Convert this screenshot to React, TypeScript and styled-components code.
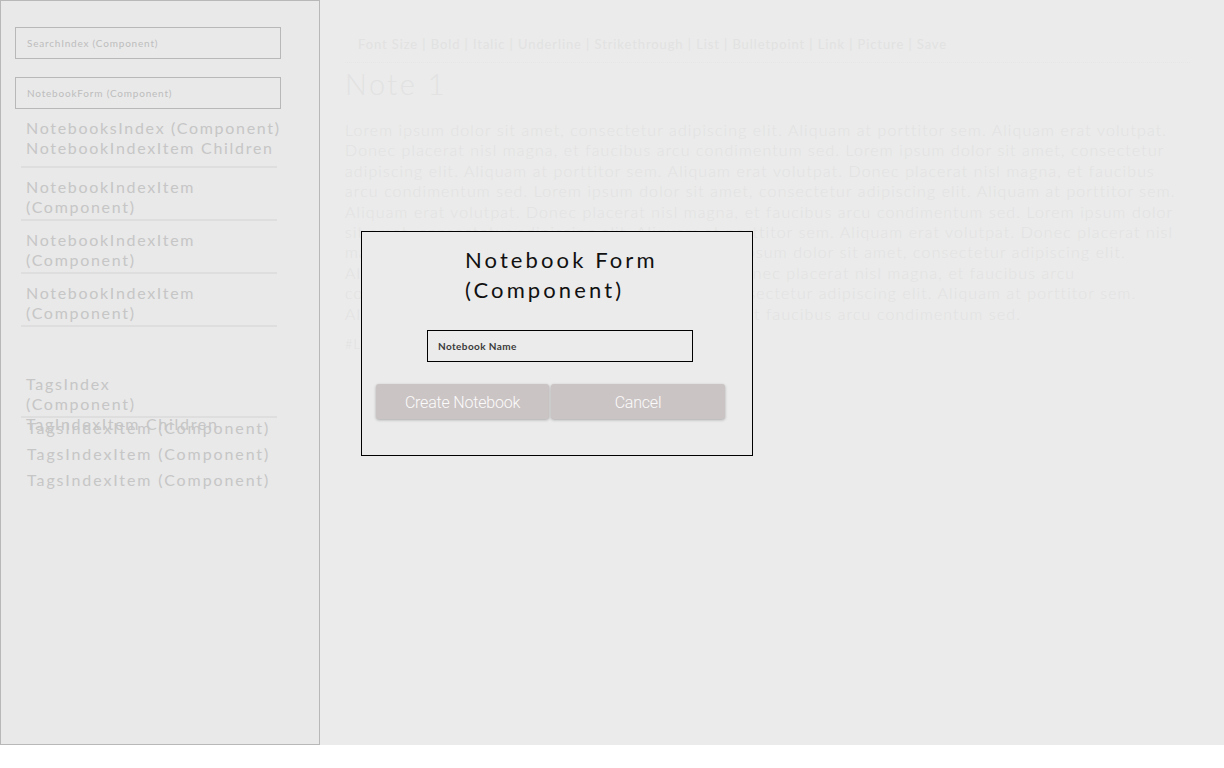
import * as React from 'react';
import styled, { createGlobalStyle } from 'styled-components';

const GlobalStyle = createGlobalStyle`
  html, body {
    margin: 0;
    padding: 0;
    background: #ffffff;
  }
  * {
    box-sizing: border-box;
  }
`

const Page = styled.div`
  display: flex;
  height: 745px;
  font-family: Lato, "Open Sans", sans-serif;
`

const Sidebar = styled.aside`
  width: 320px;
  flex: none;
  height: 100%;
  background: #e9e9e9;
  border: 1px solid #b8b8b8;
  padding: 26px 0 0 14px;
  display: flex;
  flex-direction: column;
`

const SideBox = styled.div`
  width: 266px;
  height: 32px;
  border: 1px solid #b8b8b8;
  display: flex;
  align-items: center;
  padding-left: 11px;
  font-size: 10px;
  letter-spacing: 0.8px;
  color: #bdbdbd;
  margin-bottom: 18px;
`

const SideText = styled.div`
  padding-left: 11px;
  font-size: 16px;
  line-height: 20px;
  letter-spacing: 1.7px;
  color: #c6c6c6;
  white-space: nowrap;
`

const IndexHead = styled.div`
  margin-top: -9px;
  margin-left: 6px;
  width: 256px;
  padding: 0 0 8px 5px;
  border-bottom: 2px solid #dedede;
`

const IndexItem = styled.div<{ narrow?: boolean }>`
  margin-left: 6px;
  width: 256px;
  padding: 9px 0 2px 5px;
  border-bottom: 2px solid #dedede;
  ${(p) => (p.narrow ? 'margin-top: 38px;' : '')}
`

const ItemText = styled.div`
  font-size: 16px;
  line-height: 20px;
  letter-spacing: 1.7px;
  color: #c6c6c6;
  white-space: nowrap;
`

const TagChildren = styled(SideText)`
  line-height: 16px;
  margin-top: -2px;
  margin-bottom: -12px;
`

const TagItem = styled(SideText)`
  padding-left: 12px;
  line-height: 16px;
  margin-bottom: 10px;
  letter-spacing: 1.9px;
`

const Main = styled.main`
  flex: 1;
  position: relative;
  background: #ebebeb;
  padding: 35px 34px 0 25px;
  color: #e2e2e2;
  overflow: hidden;
`

const Toolbar = styled.div`
  padding: 0 0 9px 13px;
  font-size: 13px;
  letter-spacing: 0.9px;
  line-height: 18px;
  border-bottom: 1px dotted #e6e6e6;
  white-space: nowrap;
`

const NoteTitle = styled.h1`
  margin: 1px 0 0;
  font-size: 29px;
  font-weight: 300;
  letter-spacing: 2.5px;
  line-height: 40px;
`

const Body = styled.div`
  margin-top: 16px;
  font-size: 16px;
  font-weight: 300;
  line-height: 20.4px;
  letter-spacing: 1.1px;
`

const BodyLine = styled.div`
  white-space: nowrap;
`

const Hashtag = styled.div`
  margin-top: 12px;
  font-size: 13px;
  font-weight: 300;
  letter-spacing: 1px;
`

const Modal = styled.div`
  position: absolute;
  left: 41px;
  top: 231px;
  width: 392px;
  height: 225px;
  background: #ebebeb;
  border: 1px solid #000000;
  padding: 13px 0 0 14px;
  display: flex;
  flex-direction: column;
`

const ModalTitle = styled.h2`
  margin: 0 0 0 89px;
  width: 215px;
  font-size: 22px;
  font-weight: 400;
  letter-spacing: 3.1px;
  line-height: 30px;
  color: #111111;
`

const NameInput = styled.div`
  margin: 25px 0 0 51px;
  width: 266px;
  height: 32px;
  border: 1px solid #000000;
  display: flex;
  align-items: center;
  padding-left: 10px;
  font-size: 10px;
  font-weight: 700;
  letter-spacing: 0.4px;
  color: #3a3a3a;
`

const ButtonRow = styled.div`
  display: flex;
  gap: 2px;
  margin-top: 22px;
`

const Button = styled.button<{ wide?: number }>`
  width: ${(p) => p.wide || 173}px;
  height: 35px;
  border: none;
  border-radius: 3px;
  background: #cbc4c4;
  color: #fbfbfb;
  font-family: Roboto, "Open Sans", sans-serif;
  font-size: 16px;
  font-weight: 300;
  letter-spacing: -0.2px;
  padding-top: 3px;
  box-shadow: 0 1px 3px rgba(0, 0, 0, 0.28);
`

const lorem = [
  'Lorem ipsum dolor sit amet, consectetur adipiscing elit. Aliquam at porttitor sem. Aliquam erat volutpat.',
  'Donec placerat nisl magna, et faucibus arcu condimentum sed. Lorem ipsum dolor sit amet, consectetur',
  'adipiscing elit. Aliquam at porttitor sem. Aliquam erat volutpat. Donec placerat nisl magna, et faucibus',
  'arcu condimentum sed. Lorem ipsum dolor sit amet, consectetur adipiscing elit. Aliquam at porttitor sem.',
  'Aliquam erat volutpat. Donec placerat nisl magna, et faucibus arcu condimentum sed. Lorem ipsum dolor',
  'sit amet, consectetur adipiscing elit. Aliquam at porttitor sem. Aliquam erat volutpat. Donec placerat nisl',
  'magna, et faucibus arcu condimentum sed. Lorem ipsum dolor sit amet, consectetur adipiscing elit.',
  'Aliquam at porttitor sem. Aliquam erat volutpat. Donec placerat nisl magna, et faucibus arcu',
  'condimentum sed. Lorem ipsum dolor sit amet, consectetur adipiscing elit. Aliquam at porttitor sem.',
  'Aliquam erat volutpat. Donec placerat nisl magna, et faucibus arcu condimentum sed.',
]

export default function App() {
  return (
    <>
      <GlobalStyle />
      <Page>
        <Sidebar>
          <SideBox>SearchIndex (Component)</SideBox>
          <SideBox>NotebookForm (Component)</SideBox>
          <IndexHead>
            <ItemText>NotebooksIndex (Component)</ItemText>
            <ItemText>NotebookIndexItem Children</ItemText>
          </IndexHead>
          {[0, 1, 2].map((i) => (
            <IndexItem key={i}>
              <ItemText>NotebookIndexItem</ItemText>
              <ItemText>(Component)</ItemText>
            </IndexItem>
          ))}
          <IndexItem narrow>
            <ItemText>TagsIndex</ItemText>
            <ItemText>(Component)</ItemText>
          </IndexItem>
          <TagChildren>TagIndexItem Children</TagChildren>
          <TagItem>TagsIndexItem (Component)</TagItem>
          <TagItem>TagsIndexItem (Component)</TagItem>
          <TagItem>TagsIndexItem (Component)</TagItem>
        </Sidebar>
        <Main>
          <Toolbar>
            Font Size | Bold | Italic | Underline | Strikethrough | List | Bulletpoint | Link | Picture | Save
          </Toolbar>
          <NoteTitle>Note 1</NoteTitle>
          <Body>
            {lorem.map((line, i) => (
              <BodyLine key={i}>{line}</BodyLine>
            ))}
          </Body>
          <Hashtag>#Lorem #Ipsum</Hashtag>
          <Modal>
            <ModalTitle>Notebook Form (Component)</ModalTitle>
            <NameInput>Notebook Name</NameInput>
            <ButtonRow>
              <Button>Create Notebook</Button>
              <Button wide={174}>Cancel</Button>
            </ButtonRow>
          </Modal>
        </Main>
      </Page>
    </>
  );
}
